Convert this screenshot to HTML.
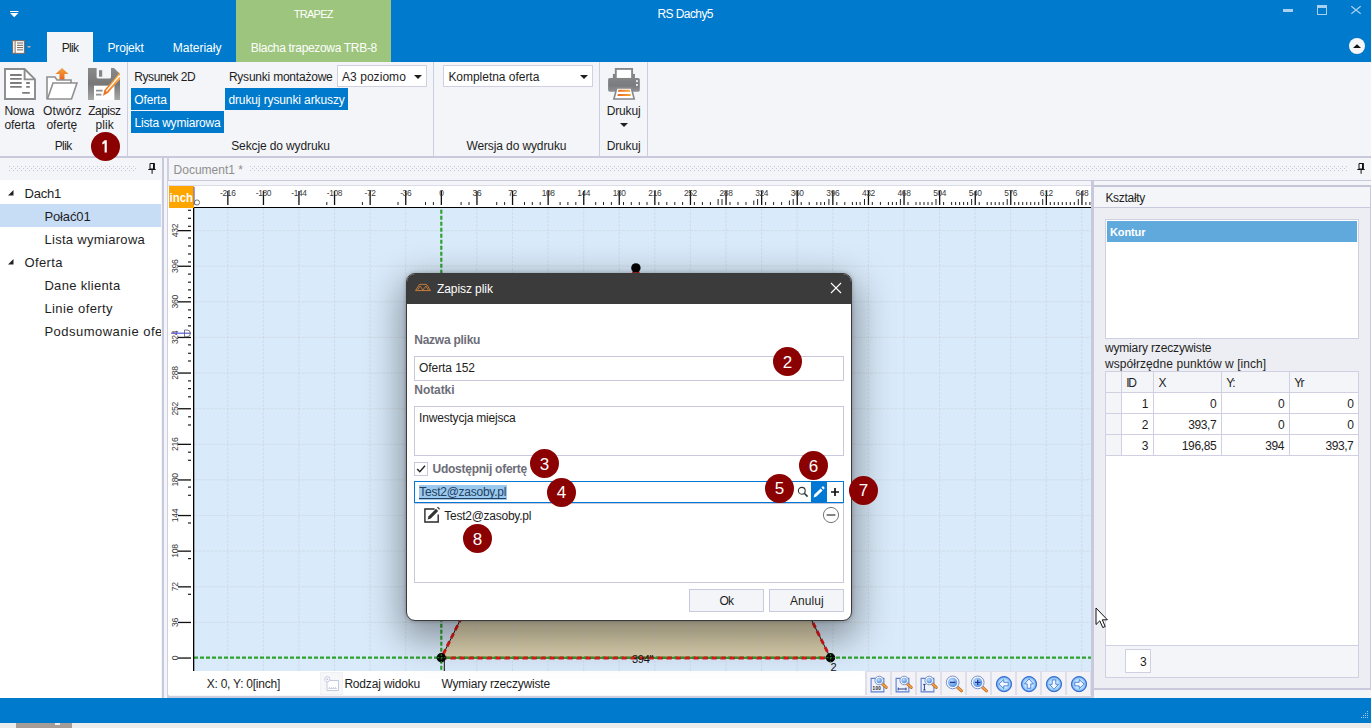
<!DOCTYPE html>
<html>
<head>
<meta charset="utf-8">
<title>RS Dachy5</title>
<style>
*{box-sizing:border-box;margin:0;padding:0}
html,body{width:1371px;height:728px;overflow:hidden}
body{position:relative;background:#f4f5f8;font-family:"Liberation Sans",sans-serif;font-size:12px;color:#1e1e1e}
.a{position:absolute}
.t{position:absolute;white-space:pre;line-height:16px;height:16px}
.combo{position:absolute;background:#fff;border:1px solid #d0d0e2;height:22px}
</style>
</head>
<body>

<div class="a" style="left:0;top:0;width:1371px;height:62px;background:#007acc"></div>
<div class="a" style="left:236px;top:0;width:155px;height:62px;background:#9dc57d"></div>
<div class="a" style="left:47px;top:32px;width:46px;height:31px;background:#f4f5f8"></div>
<svg class="a" style="left:9px;top:9px" width="12" height="10" viewBox="0 0 12 10"><rect x="1" y="2" width="8.4" height="1" fill="#fff"/><path d="M1 4 L9.4 4 L5.2 8.2 Z" fill="#fff"/></svg>
<div class="t" style="left:293.7px;top:6.0px;font-size:11px;color:#fff;letter-spacing:-0.72px;">TRAPEZ</div>
<div class="t" style="left:657.5px;top:6.0px;font-size:12px;color:#fff;letter-spacing:-0.59px;">RS Dachy5</div>
<div class="a" style="left:1283px;top:9px;width:10px;height:3px;background:#a9d0ee"></div>
<div class="a" style="left:1317px;top:5px;width:10px;height:10px;border:1px solid #a9d0ee;border-top:3px solid #a9d0ee"></div>
<svg class="a" style="left:1350px;top:5px" width="12" height="10" viewBox="0 0 12 10"><path d="M1.3 1.2 L10.7 8.8 M10.7 1.2 L1.3 8.8" stroke="#a9d0ee" stroke-width="1.2" fill="none"/></svg>
<svg class="a" style="left:12px;top:40px" width="21" height="14" viewBox="0 0 21 14"><rect x="0.6" y="0.6" width="11.8" height="12.8" fill="#fff" stroke="#7d6c66" stroke-width="1.1"/><rect x="2.6" y="0.6" width="1" height="12.8" fill="#7d6c66"/><path d="M5 3 H11 M5 5.3 H11 M5 7.6 H11 M5 9.9 H11" stroke="#6f605b" stroke-width="1"/><path d="M14.8 6 L19.2 6 L17 8.3 Z" fill="#b5a8a6"/></svg>
<div class="t" style="left:61.8px;top:40.0px;font-size:12px;color:#1e1e1e;letter-spacing:-0.71px;">Plik</div>
<div class="t" style="left:107.5px;top:40.0px;font-size:12px;color:#fff;letter-spacing:-0.18px;">Projekt</div>
<div class="t" style="left:172.7px;top:40.0px;font-size:12px;color:#fff;letter-spacing:0.01px;">Materiały</div>
<div class="t" style="left:250.8px;top:40.0px;font-size:12px;color:#fff;letter-spacing:-0.32px;">Blacha trapezowa TRB-8</div>
<div class="a" style="left:1349px;top:38px;width:16px;height:16px;border-radius:50%;background:#f6f6f8"></div>
<svg class="a" style="left:1349px;top:38px" width="16" height="16" viewBox="0 0 16 16"><path d="M4 9.9 L12 9.9 L8 6.2 Z" fill="#111"/></svg>


<div class="a" style="left:0;top:62px;width:1371px;height:96px;background:#f4f5f8;border-bottom:2px solid #c9c9dd"></div>
<svg class="a" style="left:4px;top:68px" width="32" height="32" viewBox="0 0 32 32"><path d="M1 1 H20.6 L31 11.4 V31 H1 Z" fill="#fff" stroke="#8c8c8c" stroke-width="1.9"/><path d="M20.6 1 V11.4 H31" fill="none" stroke="#8c8c8c" stroke-width="1.9"/><path d="M6.1 7 H17.7 M6.1 10.9 H17.7 M6.1 15 H17.7 M6.1 18.9 H17.7 M22.2 15 H25.8 M22.2 18.9 H25.8 M18.2 24.9 H25.8" stroke="#7c7c7c" stroke-width="1.8"/></svg><svg class="a" style="left:46px;top:68px" width="32" height="32" viewBox="0 0 32 32"><defs><linearGradient id="og" x1="0" y1="0" x2="0" y2="1"><stop offset="0" stop-color="#f6a23c"/><stop offset="1" stop-color="#e8641c"/></linearGradient></defs><path d="M16 0 L22.5 6 H18.5 V12 H13.5 V6 H9.5 Z" fill="url(#og)"/><path d="M1 31 V9 H9 L11 12 H25 V15" fill="#fff" stroke="#8f8f8f" stroke-width="1.6"/><path d="M1.5 31 L7 15 H31 L25.5 31 Z" fill="#fff" stroke="#8f8f8f" stroke-width="1.6"/></svg><svg class="a" style="left:88px;top:68px" width="32" height="32" viewBox="0 0 32 32"><defs><linearGradient id="sg" x1="0" y1="0" x2="0" y2="1"><stop offset="0" stop-color="#8a8a8a"/><stop offset="0.5" stop-color="#777"/><stop offset="1" stop-color="#a8a8a8"/></linearGradient><linearGradient id="pg" x1="0" y1="1" x2="1" y2="0"><stop offset="0" stop-color="#ea6a1c"/><stop offset="1" stop-color="#f9b24a"/></linearGradient></defs><path d="M0 0 H26 L32 6 V32 H0 Z" fill="url(#sg)"/><path d="M8.6 0 H23 V9 Q23 10.5 21.5 10.5 H10.1 Q8.6 10.5 8.6 9 Z" fill="#f4f5f8"/><rect x="11" y="2.2" width="3.2" height="6.5" fill="#858585"/><rect x="6" y="17.7" width="20.4" height="14.3" fill="#fff"/><path d="M8 22.7 H14.6 M8 26.7 H13.4" stroke="#8e8e8e" stroke-width="1.8"/><path d="M32 4.2 V11.2 L20 25 L15 27.8 L16.4 22 Z" fill="url(#pg)"/><path d="M31.6 7.6 L18.2 23.4" stroke="#fff" stroke-width="1.3"/></svg><svg class="a" style="left:607px;top:68px" width="34" height="32" viewBox="0 0 34 32"><defs><linearGradient id="prg" x1="0" y1="0" x2="0" y2="1"><stop offset="0" stop-color="#838588"/><stop offset=".55" stop-color="#797b7e"/><stop offset="1" stop-color="#8f9194"/></linearGradient><linearGradient id="pog" x1="0" y1="0" x2="1" y2="0"><stop offset="0" stop-color="#ea661a"/><stop offset="1" stop-color="#f8aa3e"/></linearGradient></defs><rect x="5.9" y="5.9" width="22" height="5" fill="#808285"/><rect x="8.8" y="0.9" width="16.3" height="10" fill="#fff" stroke="#858789" stroke-width="1.9"/><rect x="1.1" y="10" width="31.7" height="13.7" rx="1.6" fill="url(#prg)"/><rect x="29" y="12.2" width="1.9" height="1.9" fill="#f0f0f2"/><rect x="29" y="16" width="1.9" height="1.9" fill="#f0f0f2"/><path d="M9.8 19.9 H24.3 L27.2 31 H6.9 Z" fill="#fff" stroke="#858789" stroke-width="1.6"/><path d="M11.4 21.8 H23 L23.3 23.7 H11 Z" fill="url(#pog)"/><path d="M10.8 25.9 H23.6 L23.9 27.9 H10.4 Z" fill="url(#pog)"/></svg>
<div class="t" style="left:4.4px;top:103.0px;font-size:12px;color:#1e1e1e;letter-spacing:-0.23px;">Nowa</div><div class="t" style="left:4.4px;top:117.0px;font-size:12px;color:#1e1e1e;letter-spacing:-0.02px;">oferta</div>
<div class="t" style="left:43.1px;top:103.0px;font-size:12px;color:#1e1e1e;letter-spacing:0.06px;">Otwórz</div><div class="t" style="left:46.4px;top:117.0px;font-size:12px;color:#1e1e1e;letter-spacing:0.02px;">ofertę</div>
<div class="t" style="left:88.2px;top:103.0px;font-size:12px;color:#1e1e1e;letter-spacing:-0.51px;">Zapisz</div><div class="t" style="left:95.6px;top:117.0px;font-size:12px;color:#1e1e1e;letter-spacing:0.06px;">plik</div>
<div class="t" style="left:54.7px;top:138.0px;font-size:12px;color:#1e1e1e;letter-spacing:-0.61px;">Plik</div>
<div class="a" style="left:127px;top:62px;width:1px;height:94px;background:#cdcde0"></div><div class="a" style="left:433px;top:62px;width:1px;height:94px;background:#cdcde0"></div><div class="a" style="left:599px;top:62px;width:1px;height:94px;background:#cdcde0"></div><div class="a" style="left:647px;top:62px;width:1px;height:94px;background:#cdcde0"></div>
<div class="t" style="left:134.3px;top:69.0px;font-size:12px;color:#1e1e1e;letter-spacing:-0.44px;">Rysunek 2D</div>
<div class="a" style="left:131px;top:88px;width:39px;height:22px;background:#007acc"></div><div class="t" style="left:134.3px;top:92.0px;font-size:12px;color:#fff;letter-spacing:-0.13px;">Oferta</div>
<div class="a" style="left:131px;top:111px;width:93px;height:22px;background:#007acc"></div><div class="t" style="left:134.6px;top:115.0px;font-size:12px;color:#fff;letter-spacing:-0.19px;">Lista wymiarowa</div>
<div class="t" style="left:228.9px;top:69.0px;font-size:12px;color:#1e1e1e;letter-spacing:-0.22px;">Rysunki montażowe</div>
<div class="combo" style="left:337px;top:65px;width:90px"></div>
<div class="t" style="left:342.0px;top:69.0px;font-size:12px;color:#1e1e1e;letter-spacing:0.05px;">A3 poziomo</div><svg class="a" style="left:414px;top:75.4px" width="8" height="4" viewBox="0 0 8 4"><path d="M0 0 H8 L4.0 4 Z" fill="#1e1e1e"/></svg>
<div class="a" style="left:225px;top:88px;width:123px;height:22px;background:#007acc"></div><div class="t" style="left:228.4px;top:92.0px;font-size:12px;color:#fff;letter-spacing:-0.11px;">drukuj rysunki arkuszy</div>
<div class="t" style="left:231.2px;top:138.0px;font-size:12px;color:#1e1e1e;letter-spacing:-0.12px;">Sekcje do wydruku</div>
<div class="combo" style="left:443px;top:65px;width:150px"></div>
<div class="t" style="left:448.4px;top:69.0px;font-size:12px;color:#1e1e1e;letter-spacing:-0.03px;">Kompletna oferta</div><svg class="a" style="left:580px;top:75.4px" width="8" height="4" viewBox="0 0 8 4"><path d="M0 0 H8 L4.0 4 Z" fill="#1e1e1e"/></svg>
<div class="t" style="left:466.4px;top:138.0px;font-size:12px;color:#1e1e1e;letter-spacing:-0.11px;">Wersja do wydruku</div>
<div class="t" style="left:606.8px;top:103.0px;font-size:12px;color:#1e1e1e;letter-spacing:-0.18px;">Drukuj</div><svg class="a" style="left:620px;top:123px" width="8" height="4" viewBox="0 0 8 4"><path d="M0 0 H8 L4.0 4 Z" fill="#1e1e1e"/></svg>
<div class="t" style="left:606.8px;top:138.0px;font-size:12px;color:#1e1e1e;letter-spacing:-0.18px;">Drukuj</div>


<!-- left panel -->
<div class="a" style="left:0;top:180px;width:161px;height:518px;background:#fff"></div>
<svg class="a" style="left:9px;top:166px" width="128" height="5"><defs><pattern id="gp9" width="4" height="4" patternUnits="userSpaceOnUse"><rect x="0" y="0" width="1" height="1" fill="#c4c4d4"/><rect x="2" y="2" width="1" height="1" fill="#c4c4d4"/></pattern></defs><rect width="128" height="5" fill="url(#gp9)"/></svg><svg class="a" style="left:147.5px;top:163px" width="8" height="11" viewBox="0 0 8 11"><path d="M2 0.5 H6.2 V6 H2 Z" fill="none" stroke="#111" stroke-width="1"/><rect x="5" y="0" width="1.7" height="6" fill="#111"/><rect x="0.3" y="6" width="7.4" height="1" fill="#111"/><rect x="3.6" y="7" width="1" height="3.8" fill="#111"/></svg>
<div class="a" style="left:162px;top:158px;width:1.5px;height:540px;background:#c9c9dd"></div>
<div class="a" style="left:167px;top:158px;width:2px;height:540px;background:#cfcfe0"></div>
<div class="a" style="left:0;top:204px;width:161px;height:23px;background:#c7dcf5"></div>
<div class="a" style="left:0;top:180px;width:161px;height:518px;overflow:hidden"><div class="a" style="left:0;top:-180px;width:400px;height:728px">
<svg class="a" style="left:7.5px;top:189.5px" width="6" height="6" viewBox="0 0 6 6"><path d="M5.5 0 V5.5 H0 Z" fill="#222"/></svg><div class="t" style="left:24.5px;top:186.0px;font-size:13px;color:#1e1e1e;letter-spacing:-0.22px;">Dach1</div>
<div class="t" style="left:44.4px;top:209.0px;font-size:13px;color:#1e1e1e;letter-spacing:-0.11px;">Połać01</div>
<div class="t" style="left:44.4px;top:232.0px;font-size:13px;color:#1e1e1e;letter-spacing:0.31px;">Lista wymiarowa</div>
<svg class="a" style="left:7.5px;top:258.5px" width="6" height="6" viewBox="0 0 6 6"><path d="M5.5 0 V5.5 H0 Z" fill="#222"/></svg><div class="t" style="left:24.5px;top:255.0px;font-size:13px;color:#1e1e1e;letter-spacing:0.35px;">Oferta</div>
<div class="t" style="left:44.4px;top:278.0px;font-size:13px;color:#1e1e1e;letter-spacing:0.33px;">Dane klienta</div>
<div class="t" style="left:44.4px;top:301.0px;font-size:13px;color:#1e1e1e;letter-spacing:0.42px;">Linie oferty</div>
<div class="t" style="left:44.4px;top:324.0px;font-size:13px;color:#1e1e1e;letter-spacing:0.49px;">Podsumowanie oferty</div>
</div></div>
<!-- doc header -->
<div class="t" style="left:173.6px;top:162.0px;font-size:12px;color:#8e8e8e;">Document1 *</div>
<svg class="a" style="left:250px;top:166px" width="1097" height="5"><defs><pattern id="gp250" width="4" height="4" patternUnits="userSpaceOnUse"><rect x="0" y="0" width="1" height="1" fill="#c4c4d4"/><rect x="2" y="2" width="1" height="1" fill="#c4c4d4"/></pattern></defs><rect width="1097" height="5" fill="url(#gp250)"/></svg><svg class="a" style="left:1357px;top:163px" width="8" height="11" viewBox="0 0 8 11"><path d="M2 0.5 H6.2 V6 H2 Z" fill="none" stroke="#111" stroke-width="1"/><rect x="5" y="0" width="1.7" height="6" fill="#111"/><rect x="0.3" y="6" width="7.4" height="1" fill="#111"/><rect x="3.6" y="7" width="1" height="3.8" fill="#111"/></svg>
<div class="a" style="left:168px;top:180px;width:1203px;height:1px;background:#c9c9dd"></div>

<svg class="a" style="left:0;top:0" width="1371" height="728" viewBox="0 0 1371 728"><rect x="168" y="181" width="923" height="5" fill="#f4f5f8"/><rect x="168" y="185" width="923" height="1" fill="#dcdce8"/><rect x="168" y="186" width="923" height="22" fill="#fff"/><rect x="168" y="208" width="26" height="463" fill="#fff"/><rect x="194" y="208" width="897" height="463" fill="#d9eafa"/><defs><linearGradient id="tg" x1="0" y1="0" x2="0" y2="1"><stop offset="0" stop-color="#efe6cc"/><stop offset="1" stop-color="#dbd0ad"/></linearGradient></defs><path d="M441.3 658.0 L830.5 658.0 L635.9 268.2 Z" fill="url(#tg)"/><path d="M227.8 208 V671 M263.4 208 V671 M298.9 208 V671 M334.5 208 V671 M370.1 208 V671 M405.7 208 V671 M441.3 208 V671 M476.9 208 V671 M512.5 208 V671 M548.1 208 V671 M583.7 208 V671 M619.2 208 V671 M654.8 208 V671 M690.4 208 V671 M726.0 208 V671 M761.6 208 V671 M797.2 208 V671 M832.8 208 V671 M868.4 208 V671 M904.0 208 V671 M939.6 208 V671 M975.2 208 V671 M1010.7 208 V671 M1046.3 208 V671 M1081.9 208 V671 M194 658.0 H1091 M194 622.4 H1091 M194 586.8 H1091 M194 551.1 H1091 M194 515.5 H1091 M194 479.9 H1091 M194 444.3 H1091 M194 408.7 H1091 M194 373.0 H1091 M194 337.4 H1091 M194 301.8 H1091 M194 266.2 H1091 M194 230.6 H1091" stroke="#c9d1da" stroke-width="1" stroke-dasharray="3 1" fill="none" opacity=".5"/><path d="M441.3 209.8 V671" stroke="#2ea32e" stroke-width="2.2" stroke-dasharray="4 2" fill="none"/><path d="M194 657.7 H1091" stroke="#2ea32e" stroke-width="2.2" stroke-dasharray="4 2" fill="none"/><path d="M441.3 658.0 L830.5 658.0 L635.9 268.2 Z" stroke="#111" stroke-width="1" fill="none"/><path d="M441.3 658.0 L830.5 658.0 L635.9 268.2 Z" stroke="#e01818" stroke-width="2.9" stroke-dasharray="5.4 3.6" fill="none"/><path d="M441.3 657.7 H830.5" stroke="#2ea32e" stroke-width="2" stroke-dasharray="4 5" stroke-dashoffset="-5.5" fill="none"/><circle cx="441.3" cy="657.7" r="4.7" fill="#050505"/><path d="M437.3 657.7 H445.3 M441.3 654.0 V662.0" stroke="#1f7a1f" stroke-width="1.2" stroke-dasharray="2 1.5"/><circle cx="830.5" cy="657.7" r="4.7" fill="#050505"/><path d="M826.5 657.7 H834.5 M830.5 654.0 V662.0" stroke="#1f7a1f" stroke-width="1.2" stroke-dasharray="2 1.5"/><circle cx="635.9" cy="267.9" r="4.7" fill="#050505"/><clipPath id="cc"><rect x="194" y="208" width="897" height="463"/></clipPath><g clip-path="url(#cc)" font-family="Liberation Sans" font-size="11" fill="#111"><rect x="443.8" y="660" width="1" height="11" fill="#111"/><text x="830.5" y="670.8">2</text><text x="632" y="662.5" letter-spacing="-0.3">394"</text></g><rect x="194" y="207" width="897" height="1" fill="#000"/><rect x="193" y="207" width="1.3" height="464" fill="#000"/><rect x="227.2" y="191" width="1.3" height="14" fill="#111"/><rect x="262.8" y="191" width="1.3" height="14" fill="#111"/><rect x="298.3" y="191" width="1.3" height="14" fill="#111"/><rect x="326.3" y="202" width="1" height="3" fill="#222"/><rect x="333.9" y="191" width="1.3" height="14" fill="#111"/><rect x="361.9" y="202" width="1" height="3" fill="#222"/><rect x="369.5" y="191" width="1.3" height="14" fill="#111"/><rect x="397.5" y="202" width="1" height="3" fill="#222"/><rect x="405.1" y="191" width="1.3" height="14" fill="#111"/><rect x="425.0" y="202" width="1" height="3" fill="#222"/><rect x="432.9" y="202" width="1" height="3" fill="#222"/><rect x="440.7" y="191" width="1.3" height="14" fill="#111"/><rect x="460.6" y="202" width="1" height="3" fill="#222"/><rect x="468.5" y="202" width="1" height="3" fill="#222"/><rect x="476.3" y="191" width="1.3" height="14" fill="#111"/><rect x="496.2" y="202" width="1" height="3" fill="#222"/><rect x="504.1" y="202" width="1" height="3" fill="#222"/><rect x="511.9" y="191" width="1.3" height="14" fill="#111"/><rect x="524.0" y="202" width="1" height="3" fill="#222"/><rect x="531.8" y="202" width="1" height="3" fill="#222"/><rect x="539.7" y="202" width="1" height="3" fill="#222"/><rect x="547.5" y="191" width="1.3" height="14" fill="#111"/><rect x="559.6" y="202" width="1" height="3" fill="#222"/><rect x="567.4" y="202" width="1" height="3" fill="#222"/><rect x="575.3" y="202" width="1" height="3" fill="#222"/><rect x="583.1" y="191" width="1.3" height="14" fill="#111"/><rect x="595.2" y="202" width="1" height="3" fill="#222"/><rect x="603.0" y="202" width="1" height="3" fill="#222"/><rect x="610.9" y="202" width="1" height="3" fill="#222"/><rect x="618.6" y="191" width="1.3" height="14" fill="#111"/><rect x="623.0" y="202" width="1" height="3" fill="#222"/><rect x="630.8" y="202" width="1" height="3" fill="#222"/><rect x="638.8" y="202" width="1" height="3" fill="#222"/><rect x="646.5" y="202" width="1" height="3" fill="#222"/><rect x="654.2" y="191" width="1.3" height="14" fill="#111"/><rect x="658.3" y="202" width="1" height="3" fill="#222"/><rect x="666.3" y="202" width="1" height="3" fill="#222"/><rect x="674.3" y="202" width="1" height="3" fill="#222"/><rect x="682.1" y="202" width="1" height="3" fill="#222"/><rect x="689.8" y="191" width="1.3" height="14" fill="#111"/><rect x="693.9" y="202" width="1" height="3" fill="#222"/><rect x="701.9" y="202" width="1" height="3" fill="#222"/><rect x="709.9" y="202" width="1" height="3" fill="#222"/><rect x="717.6" y="199" width="1" height="6" fill="#222"/><rect x="721.5" y="199" width="1" height="6" fill="#222"/><rect x="725.4" y="191" width="1.3" height="14" fill="#111"/><rect x="729.5" y="202" width="1" height="3" fill="#222"/><rect x="737.5" y="202" width="1" height="3" fill="#222"/><rect x="745.5" y="202" width="1" height="3" fill="#222"/><rect x="753.3" y="200.5" width="1" height="4.5" fill="#222"/><rect x="757.1" y="199" width="1" height="6" fill="#222"/><rect x="761.0" y="191" width="1.3" height="14" fill="#111"/><rect x="765.1" y="202" width="1" height="3" fill="#222"/><rect x="773.1" y="202" width="1" height="3" fill="#222"/><rect x="781.1" y="202" width="1" height="3" fill="#222"/><rect x="788.9" y="200.5" width="1" height="4.5" fill="#222"/><rect x="792.7" y="199" width="1" height="6" fill="#222"/><rect x="796.6" y="191" width="1.3" height="14" fill="#111"/><rect x="800.7" y="202" width="1" height="3" fill="#222"/><rect x="808.7" y="202" width="1" height="3" fill="#222"/><rect x="816.3" y="202" width="1" height="3" fill="#222"/><rect x="820.3" y="202" width="1" height="3" fill="#222"/><rect x="824.0" y="202" width="1" height="3" fill="#222"/><rect x="828.4" y="199" width="1" height="6" fill="#222"/><rect x="832.2" y="191" width="1.3" height="14" fill="#111"/><rect x="836.3" y="202" width="1" height="3" fill="#222"/><rect x="844.3" y="202" width="1" height="3" fill="#222"/><rect x="851.9" y="202" width="1" height="3" fill="#222"/><rect x="855.9" y="202" width="1" height="3" fill="#222"/><rect x="859.6" y="202" width="1" height="3" fill="#222"/><rect x="864.0" y="199" width="1" height="6" fill="#222"/><rect x="867.8" y="191" width="1.3" height="14" fill="#111"/><rect x="871.8" y="202" width="1" height="3" fill="#222"/><rect x="879.9" y="202" width="1" height="3" fill="#222"/><rect x="887.9" y="202" width="1" height="3" fill="#222"/><rect x="891.9" y="202" width="1" height="3" fill="#222"/><rect x="895.9" y="202" width="1" height="3" fill="#222"/><rect x="899.9" y="199" width="1" height="6" fill="#222"/><rect x="903.4" y="191" width="1.3" height="14" fill="#111"/><rect x="907.5" y="202" width="1" height="3" fill="#222"/><rect x="915.5" y="202" width="1" height="3" fill="#222"/><rect x="919.5" y="202" width="1" height="3" fill="#222"/><rect x="923.5" y="202" width="1" height="3" fill="#222"/><rect x="927.5" y="202" width="1" height="3" fill="#222"/><rect x="931.5" y="202" width="1" height="3" fill="#222"/><rect x="935.5" y="199" width="1" height="6" fill="#222"/><rect x="939.0" y="191" width="1.3" height="14" fill="#111"/><rect x="943.1" y="202" width="1" height="3" fill="#222"/><rect x="951.1" y="202" width="1" height="3" fill="#222"/><rect x="955.1" y="202" width="1" height="3" fill="#222"/><rect x="959.1" y="202" width="1" height="3" fill="#222"/><rect x="963.1" y="202" width="1" height="3" fill="#222"/><rect x="967.1" y="202" width="1" height="3" fill="#222"/><rect x="971.1" y="199" width="1" height="6" fill="#222"/><rect x="974.6" y="191" width="1.3" height="14" fill="#111"/><rect x="978.7" y="202" width="1" height="3" fill="#222"/><rect x="986.7" y="202" width="1" height="3" fill="#222"/><rect x="990.7" y="202" width="1" height="3" fill="#222"/><rect x="994.7" y="202" width="1" height="3" fill="#222"/><rect x="998.7" y="202" width="1" height="3" fill="#222"/><rect x="1002.7" y="202" width="1" height="3" fill="#222"/><rect x="1006.7" y="199" width="1" height="6" fill="#222"/><rect x="1010.1" y="191" width="1.3" height="14" fill="#111"/><rect x="1014.2" y="202" width="1" height="3" fill="#222"/><rect x="1018.2" y="202" width="1" height="3" fill="#222"/><rect x="1022.2" y="202" width="1" height="3" fill="#222"/><rect x="1026.2" y="202" width="1" height="3" fill="#222"/><rect x="1030.2" y="202" width="1" height="3" fill="#222"/><rect x="1034.2" y="202" width="1" height="3" fill="#222"/><rect x="1038.2" y="202" width="1" height="3" fill="#222"/><rect x="1042.2" y="199" width="1" height="6" fill="#222"/><rect x="1045.7" y="191" width="1.3" height="14" fill="#111"/><rect x="1049.8" y="202" width="1" height="3" fill="#222"/><rect x="1053.8" y="202" width="1" height="3" fill="#222"/><rect x="1057.8" y="202" width="1" height="3" fill="#222"/><rect x="1061.8" y="202" width="1" height="3" fill="#222"/><rect x="1065.8" y="202" width="1" height="3" fill="#222"/><rect x="1069.8" y="202" width="1" height="3" fill="#222"/><rect x="1073.8" y="202" width="1" height="3" fill="#222"/><rect x="1077.8" y="199" width="1" height="6" fill="#222"/><rect x="1081.3" y="191" width="1.3" height="14" fill="#111"/><rect x="1085.4" y="202" width="1" height="3" fill="#222"/><rect x="1089.4" y="202" width="1" height="3" fill="#222"/><clipPath id="rc"><rect x="194" y="186" width="897" height="22"/></clipPath><g clip-path="url(#rc)" font-family="Liberation Sans" font-size="8.4" fill="#3a3a3a" letter-spacing="-0.35"><text x="227.8" y="196" text-anchor="middle">-216</text><text x="263.4" y="196" text-anchor="middle">-180</text><text x="298.9" y="196" text-anchor="middle">-144</text><text x="334.5" y="196" text-anchor="middle">-108</text><text x="370.1" y="196" text-anchor="middle">-72</text><text x="405.7" y="196" text-anchor="middle">-36</text><text x="441.3" y="196" text-anchor="middle">0</text><text x="476.9" y="196" text-anchor="middle">36</text><text x="512.5" y="196" text-anchor="middle">72</text><text x="548.1" y="196" text-anchor="middle">108</text><text x="583.7" y="196" text-anchor="middle">144</text><text x="619.2" y="196" text-anchor="middle">180</text><text x="654.8" y="196" text-anchor="middle">216</text><text x="690.4" y="196" text-anchor="middle">252</text><text x="726.0" y="196" text-anchor="middle">288</text><text x="761.6" y="196" text-anchor="middle">324</text><text x="797.2" y="196" text-anchor="middle">360</text><text x="832.8" y="196" text-anchor="middle">396</text><text x="868.4" y="196" text-anchor="middle">432</text><text x="904.0" y="196" text-anchor="middle">468</text><text x="939.6" y="196" text-anchor="middle">504</text><text x="975.2" y="196" text-anchor="middle">540</text><text x="1010.7" y="196" text-anchor="middle">576</text><text x="1046.3" y="196" text-anchor="middle">612</text><text x="1081.9" y="196" text-anchor="middle">648</text></g><rect x="178" y="657.4" width="13" height="1.3" fill="#111"/><rect x="178" y="621.8" width="13" height="1.3" fill="#111"/><rect x="178" y="586.2" width="13" height="1.3" fill="#111"/><rect x="188" y="593.7" width="3" height="1.2" fill="#222"/><rect x="178" y="550.5" width="13" height="1.3" fill="#111"/><rect x="188" y="558.0" width="3" height="1.2" fill="#222"/><rect x="178" y="514.9" width="13" height="1.3" fill="#111"/><rect x="188" y="522.4" width="3" height="1.2" fill="#222"/><rect x="178" y="479.3" width="13" height="1.3" fill="#111"/><rect x="188" y="486.5" width="3" height="1.2" fill="#222"/><rect x="188" y="494.7" width="3" height="1.2" fill="#222"/><rect x="178" y="443.7" width="13" height="1.3" fill="#111"/><rect x="188" y="451.6" width="3" height="1.2" fill="#222"/><rect x="188" y="459.7" width="3" height="1.2" fill="#222"/><rect x="178" y="408.1" width="13" height="1.3" fill="#111"/><rect x="188" y="416.2" width="3" height="1.2" fill="#222"/><rect x="188" y="424.4" width="3" height="1.2" fill="#222"/><rect x="178" y="372.4" width="13" height="1.3" fill="#111"/><rect x="188" y="380.3" width="3" height="1.2" fill="#222"/><rect x="188" y="388.0" width="3" height="1.2" fill="#222"/><rect x="188" y="396.2" width="3" height="1.2" fill="#222"/><rect x="178" y="336.8" width="13" height="1.3" fill="#111"/><rect x="188" y="344.3" width="3" height="1.2" fill="#222"/><rect x="188" y="352.7" width="3" height="1.2" fill="#222"/><rect x="188" y="360.4" width="3" height="1.2" fill="#222"/><rect x="178" y="301.2" width="13" height="1.3" fill="#111"/><rect x="188" y="309.3" width="3" height="1.2" fill="#222"/><rect x="188" y="317.0" width="3" height="1.2" fill="#222"/><rect x="188" y="325.3" width="3" height="1.2" fill="#222"/><rect x="178" y="265.6" width="13" height="1.3" fill="#111"/><rect x="188" y="273.5" width="3" height="1.2" fill="#222"/><rect x="188" y="281.6" width="3" height="1.2" fill="#222"/><rect x="188" y="289.3" width="3" height="1.2" fill="#222"/><rect x="188" y="297.0" width="3" height="1.2" fill="#222"/><rect x="178" y="230.0" width="13" height="1.3" fill="#111"/><rect x="188" y="237.4" width="3" height="1.2" fill="#222"/><rect x="188" y="245.4" width="3" height="1.2" fill="#222"/><rect x="188" y="253.4" width="3" height="1.2" fill="#222"/><rect x="188" y="261.4" width="3" height="1.2" fill="#222"/><rect x="188" y="209.7" width="3" height="1.2" fill="#222"/><rect x="188" y="217.7" width="3" height="1.2" fill="#222"/><rect x="188" y="225.7" width="3" height="1.2" fill="#222"/><g font-family="Liberation Sans" font-size="8.6" fill="#3a3a3a" letter-spacing="-0.3"><text transform="translate(177.6 658.0) rotate(-90)" text-anchor="middle">0</text><text transform="translate(177.6 622.4) rotate(-90)" text-anchor="middle">36</text><text transform="translate(177.6 586.8) rotate(-90)" text-anchor="middle">72</text><text transform="translate(177.6 551.1) rotate(-90)" text-anchor="middle">108</text><text transform="translate(177.6 515.5) rotate(-90)" text-anchor="middle">144</text><text transform="translate(177.6 479.9) rotate(-90)" text-anchor="middle">180</text><text transform="translate(177.6 444.3) rotate(-90)" text-anchor="middle">216</text><text transform="translate(177.6 408.7) rotate(-90)" text-anchor="middle">252</text><text transform="translate(177.6 373.0) rotate(-90)" text-anchor="middle">288</text><text transform="translate(177.6 337.4) rotate(-90)" text-anchor="middle">324</text><text transform="translate(177.6 301.8) rotate(-90)" text-anchor="middle">360</text><text transform="translate(177.6 266.2) rotate(-90)" text-anchor="middle">396</text><text transform="translate(177.6 230.6) rotate(-90)" text-anchor="middle">432</text></g><rect x="169" y="186" width="25" height="22" fill="#fea500"/><text x="169.6" y="201.9" font-family="Liberation Sans" font-size="13" font-weight="bold" fill="#fff" textLength="23.4" lengthAdjust="spacingAndGlyphs">inch</text><rect x="193.6" y="187" width="1" height="18" fill="#5a5ae0"/><circle cx="197" cy="202.5" r="2.6" fill="none" stroke="#555" stroke-width=".8"/><rect x="171" y="332.6" width="20" height="1.2" fill="#5a5ae0"/><path d="M184.5 330 h2.5 a3.4 3.4 0 0 1 0 6.8 h-2.5 z" fill="none" stroke="#555" stroke-width=".8"/></svg>

<div class="a" style="left:1091px;top:181px;width:3px;height:517px;background:#c9c9dd"></div>
<div class="a" style="left:1094px;top:185px;width:277px;height:2px;background:#c5c5d8"></div>
<div class="a" style="left:1094px;top:187px;width:277px;height:20px;background:#f4f5f8"></div>
<div class="a" style="left:1094px;top:207px;width:277px;height:1px;background:#c9c9dd"></div>
<div class="a" style="left:1094px;top:208px;width:276px;height:480px;background:#edeef3"></div>
<div class="a" style="left:1370px;top:187px;width:1px;height:503px;background:#c9c9dd"></div>
<div class="a" style="left:1094px;top:688px;width:277px;height:2px;background:#c9c9dd"></div>
<div class="t" style="left:1105.4px;top:190.0px;font-size:12px;color:#1e1e1e;letter-spacing:-0.29px;">Kształty</div>
<div class="a" style="left:1105px;top:219px;width:254px;height:120px;background:#fff;border:1px solid #cfcfe0"></div>
<div class="a" style="left:1107px;top:221px;width:250px;height:21px;background:#5fa9dd"></div>
<div class="t" style="left:1110.0px;top:224.0px;font-size:11px;color:#fff;font-weight:bold;letter-spacing:-0.11px;">Kontur</div>
<div class="t" style="left:1104.9px;top:340.0px;font-size:12px;color:#1e1e1e;letter-spacing:-0.15px;">wymiary rzeczywiste</div>
<div class="t" style="left:1104.9px;top:356.0px;font-size:12px;color:#1e1e1e;letter-spacing:0.07px;">współrzędne punktów w [inch]</div>
<div class="a" style="left:1105px;top:371px;width:254px;height:307px;background:#fff;border:1px solid #d0d0e2"></div>
<div class="a" style="left:1106px;top:372px;width:16px;height:21px;background:#f4f5f8;border-right:1px solid #d0d0e2;border-bottom:1px solid #d0d0e2"></div><div class="a" style="left:1122px;top:372px;width:32px;height:21px;background:#f4f5f8;border-right:1px solid #d0d0e2;border-bottom:1px solid #d0d0e2"></div><div class="a" style="left:1154px;top:372px;width:68px;height:21px;background:#f4f5f8;border-right:1px solid #d0d0e2;border-bottom:1px solid #d0d0e2"></div><div class="a" style="left:1222px;top:372px;width:68px;height:21px;background:#f4f5f8;border-right:1px solid #d0d0e2;border-bottom:1px solid #d0d0e2"></div><div class="a" style="left:1290px;top:372px;width:69px;height:21px;background:#f4f5f8;border-right:1px solid #d0d0e2;border-bottom:1px solid #d0d0e2"></div><div class="a" style="left:1106px;top:393px;width:16px;height:21px;background:#f4f5f8;border-right:1px solid #d0d0e2;border-bottom:1px solid #d0d0e2"></div><div class="a" style="left:1122px;top:393px;width:32px;height:21px;background:#fff;border-right:1px solid #d0d0e2;border-bottom:1px solid #d0d0e2"></div><div class="a" style="left:1154px;top:393px;width:68px;height:21px;background:#fff;border-right:1px solid #d0d0e2;border-bottom:1px solid #d0d0e2"></div><div class="a" style="left:1222px;top:393px;width:68px;height:21px;background:#fff;border-right:1px solid #d0d0e2;border-bottom:1px solid #d0d0e2"></div><div class="a" style="left:1290px;top:393px;width:69px;height:21px;background:#fff;border-right:1px solid #d0d0e2;border-bottom:1px solid #d0d0e2"></div><div class="a" style="left:1106px;top:414px;width:16px;height:21px;background:#f4f5f8;border-right:1px solid #d0d0e2;border-bottom:1px solid #d0d0e2"></div><div class="a" style="left:1122px;top:414px;width:32px;height:21px;background:#fff;border-right:1px solid #d0d0e2;border-bottom:1px solid #d0d0e2"></div><div class="a" style="left:1154px;top:414px;width:68px;height:21px;background:#fff;border-right:1px solid #d0d0e2;border-bottom:1px solid #d0d0e2"></div><div class="a" style="left:1222px;top:414px;width:68px;height:21px;background:#fff;border-right:1px solid #d0d0e2;border-bottom:1px solid #d0d0e2"></div><div class="a" style="left:1290px;top:414px;width:69px;height:21px;background:#fff;border-right:1px solid #d0d0e2;border-bottom:1px solid #d0d0e2"></div><div class="a" style="left:1106px;top:435px;width:16px;height:21px;background:#f4f5f8;border-right:1px solid #d0d0e2;border-bottom:1px solid #d0d0e2"></div><div class="a" style="left:1122px;top:435px;width:32px;height:21px;background:#fff;border-right:1px solid #d0d0e2;border-bottom:1px solid #d0d0e2"></div><div class="a" style="left:1154px;top:435px;width:68px;height:21px;background:#fff;border-right:1px solid #d0d0e2;border-bottom:1px solid #d0d0e2"></div><div class="a" style="left:1222px;top:435px;width:68px;height:21px;background:#fff;border-right:1px solid #d0d0e2;border-bottom:1px solid #d0d0e2"></div><div class="a" style="left:1290px;top:435px;width:69px;height:21px;background:#fff;border-right:1px solid #d0d0e2;border-bottom:1px solid #d0d0e2"></div>
<div class="t" style="left:1126.3px;top:375.0px;font-size:12px;color:#1e1e1e;letter-spacing:-1.30px;">ID</div><div class="t" style="left:1158.4px;top:375.0px;font-size:12px;color:#1e1e1e;letter-spacing:-1.42px;">X</div><div class="t" style="left:1226.2px;top:375.0px;font-size:12px;color:#1e1e1e;letter-spacing:-1.29px;">Y:</div><div class="t" style="left:1294.2px;top:375.0px;font-size:12px;color:#1e1e1e;letter-spacing:-1.80px;">Yr</div>
<div class="t" style="left:1141.8px;top:396.0px;font-size:12px;color:#1e1e1e;letter-spacing:-0.24px;">1</div><div class="t" style="left:1210.1px;top:396.0px;font-size:12px;color:#1e1e1e;letter-spacing:-0.24px;">0</div><div class="t" style="left:1278.1px;top:396.0px;font-size:12px;color:#1e1e1e;letter-spacing:-0.24px;">0</div><div class="t" style="left:1347.3px;top:396.0px;font-size:12px;color:#1e1e1e;letter-spacing:-0.24px;">0</div>
<div class="t" style="left:1141.8px;top:417.0px;font-size:12px;color:#1e1e1e;letter-spacing:-0.24px;">2</div><div class="t" style="left:1188.2px;top:417.0px;font-size:12px;color:#1e1e1e;letter-spacing:-0.41px;">393,7</div><div class="t" style="left:1278.1px;top:417.0px;font-size:12px;color:#1e1e1e;letter-spacing:-0.24px;">0</div><div class="t" style="left:1347.3px;top:417.0px;font-size:12px;color:#1e1e1e;letter-spacing:-0.24px;">0</div>
<div class="t" style="left:1141.8px;top:438.0px;font-size:12px;color:#1e1e1e;letter-spacing:-0.24px;">3</div><div class="t" style="left:1181.8px;top:438.0px;font-size:12px;color:#1e1e1e;letter-spacing:-0.37px;">196,85</div><div class="t" style="left:1265.2px;top:438.0px;font-size:12px;color:#1e1e1e;letter-spacing:-0.34px;">394</div><div class="t" style="left:1325.4px;top:438.0px;font-size:12px;color:#1e1e1e;letter-spacing:-0.41px;">393,7</div>
<div class="a" style="left:1106px;top:645px;width:252px;height:32px;background:#f4f5f8;border-top:1px solid #d0d0e2"></div>
<div class="a" style="left:1125px;top:649px;width:26px;height:24px;background:#fff;border:1px solid #d0d0e2"></div>
<div class="t" style="left:1140.0px;top:654.0px;font-size:12px;color:#1e1e1e;letter-spacing:-0.24px;">3</div>


<div class="a" style="left:168px;top:671px;width:923px;height:24px;background:#fff"></div>
<div class="a" style="left:865px;top:671px;width:226px;height:24px;background:#dfdfea"></div>
<div class="a" style="left:168px;top:696px;width:926px;height:2px;background:#cdcde0"></div>
<div class="t" style="left:206.7px;top:676.0px;font-size:12px;color:#1e1e1e;letter-spacing:-0.24px;">X: 0, Y: 0[inch]</div>
<div class="a" style="left:319.5px;top:671.5px;width:23.6px;height:23.6px;background:#f7f7fa;border:1px solid #f0f0f5"></div>
<svg class="a" style="left:322px;top:674px" width="19" height="19" viewBox="0 0 19 19"><path d="M5 6.5 H16.5 V16.5 H5 Z" fill="#fff" stroke="#c3c8dc" stroke-width="1"/><path d="M6.5 14.5 H15 M7.5 14.5 v-1.5 M9.5 14.5 v-1.5 M11.5 14.5 v-1.5 M13.5 14.5 v-1.5" stroke="#c3c8dc" stroke-width=".8" fill="none"/><circle cx="5.2" cy="5.2" r="2.6" fill="#f7f7fa" stroke="#c3c8dc" stroke-width="1.2" stroke-dasharray="1.4 .8"/><circle cx="5.2" cy="5.2" r=".9" fill="#c3c8dc"/></svg>
<div class="t" style="left:344.4px;top:676.0px;font-size:12px;color:#1e1e1e;letter-spacing:-0.19px;">Rodzaj widoku</div>
<div class="t" style="left:441.5px;top:676.0px;font-size:12px;color:#1e1e1e;letter-spacing:-0.18px;">Wymiary rzeczywiste</div>
<svg class="a" style="left:867px;top:671.6px" width="23.2" height="23.6" viewBox="0 0 23.2 23.6"><rect width="23.2" height="23.6" fill="#f3f3f7"/><defs><radialGradient id="lg" cx=".4" cy=".35" r=".7"><stop offset="0" stop-color="#bfe0ff"/><stop offset="1" stop-color="#4a8ae0"/></radialGradient><radialGradient id="bg2" cx=".5" cy=".5" r=".5"><stop offset="0" stop-color="#eaf7ff"/><stop offset=".55" stop-color="#c8e9ff"/><stop offset=".82" stop-color="#86bff6"/><stop offset="1" stop-color="#2f6ad6"/></radialGradient></defs><path d="M4.1 6.4 H16.9 V19.9 H4.1 Z" fill="#eef2fa" stroke="#5f7fd0" stroke-width="1.1"/><path d="M15.6 12.2 L19.2 15.4" stroke="#b8641c" stroke-width="3" stroke-linecap="round"/><path d="M15.6 12.2 L19.2 15.4" stroke="#f0a048" stroke-width="1.8" stroke-linecap="round"/><circle cx="12.2" cy="8.5" r="4.3" fill="#f4f7fd" stroke="#7f8fc0" stroke-width="1"/><circle cx="12.2" cy="8.5" r="2.67" fill="url(#lg)"/><text x="5.6" y="18" font-family="Liberation Sans" font-size="4.6" font-weight="bold" fill="#222" letter-spacing=".3">100</text></svg><svg class="a" style="left:892px;top:671.6px" width="23.2" height="23.6" viewBox="0 0 23.2 23.6"><rect width="23.2" height="23.6" fill="#f3f3f7"/><path d="M4.1 6.4 H16.9 V19.9 H4.1 Z" fill="#eef2fa" stroke="#5f7fd0" stroke-width="1.1"/><path d="M15.6 12.2 L19.2 15.4" stroke="#b8641c" stroke-width="3" stroke-linecap="round"/><path d="M15.6 12.2 L19.2 15.4" stroke="#f0a048" stroke-width="1.8" stroke-linecap="round"/><circle cx="12.2" cy="8.5" r="4.3" fill="#f4f7fd" stroke="#7f8fc0" stroke-width="1"/><circle cx="12.2" cy="8.5" r="2.67" fill="url(#lg)"/><path d="M6.2 17 H14 M6.2 15.6 V18.4 M14 15.6 V18.4" stroke="#2a3f8a" stroke-width="1" fill="none"/></svg><svg class="a" style="left:917px;top:671.6px" width="23.2" height="23.6" viewBox="0 0 23.2 23.6"><rect width="23.2" height="23.6" fill="#f3f3f7"/><path d="M4.1 6.4 H16.9 V19.9 H4.1 Z" fill="#eef2fa" stroke="#5f7fd0" stroke-width="1.1"/><path d="M15.6 12.2 L19.2 15.4" stroke="#b8641c" stroke-width="3" stroke-linecap="round"/><path d="M15.6 12.2 L19.2 15.4" stroke="#f0a048" stroke-width="1.8" stroke-linecap="round"/><circle cx="12.2" cy="8.5" r="4.3" fill="#f4f7fd" stroke="#7f8fc0" stroke-width="1"/><circle cx="12.2" cy="8.5" r="2.67" fill="url(#lg)"/><path d="M7.4 12.4 V18 M6.2 12.4 H8.6 M6.2 18 H8.6" stroke="#2a3f8a" stroke-width="1" fill="none"/></svg><svg class="a" style="left:942px;top:671.6px" width="23.2" height="23.6" viewBox="0 0 23.2 23.6"><rect width="23.2" height="23.6" fill="#f3f3f7"/><path d="M15.6 15.3 L19.5 18.8" stroke="#b8641c" stroke-width="3" stroke-linecap="round"/><path d="M15.6 15.3 L19.5 18.8" stroke="#f0a048" stroke-width="1.8" stroke-linecap="round"/><circle cx="10.7" cy="10.4" r="6.4" fill="#f4f7fd" stroke="#7f8fc0" stroke-width="1"/><circle cx="10.7" cy="10.4" r="4.6" fill="url(#lg)"/><path d="M8 10.4 H13.4" stroke="#1f3a9a" stroke-width="1.3"/></svg><svg class="a" style="left:967px;top:671.6px" width="23.2" height="23.6" viewBox="0 0 23.2 23.6"><rect width="23.2" height="23.6" fill="#f3f3f7"/><path d="M15.6 15.3 L19.5 18.8" stroke="#b8641c" stroke-width="3" stroke-linecap="round"/><path d="M15.6 15.3 L19.5 18.8" stroke="#f0a048" stroke-width="1.8" stroke-linecap="round"/><circle cx="10.7" cy="10.4" r="6.4" fill="#f4f7fd" stroke="#7f8fc0" stroke-width="1"/><circle cx="10.7" cy="10.4" r="4.6" fill="url(#lg)"/><path d="M8 10.4 H13.4 M10.7 7.7 V13.1" stroke="#1f3a9a" stroke-width="1.3"/></svg><svg class="a" style="left:992px;top:671.6px" width="23.2" height="23.6" viewBox="0 0 23.2 23.6"><rect width="23.2" height="23.6" fill="#f3f3f7"/><circle cx="12" cy="12.1" r="7.6" fill="url(#bg2)" stroke="#2f62cc" stroke-width=".9"/><g transform="rotate(0 12 12.1)"><path d="M6.8 12.1 L11.8 7.6 V10.3 H16.2 V13.9 H11.8 V16.6 Z" fill="#f2f8ff" stroke="#2f6ad0" stroke-width=".8"/></g></svg><svg class="a" style="left:1017px;top:671.6px" width="23.2" height="23.6" viewBox="0 0 23.2 23.6"><rect width="23.2" height="23.6" fill="#f3f3f7"/><circle cx="12" cy="12.1" r="7.6" fill="url(#bg2)" stroke="#2f62cc" stroke-width=".9"/><g transform="rotate(90 12 12.1)"><path d="M6.8 12.1 L11.8 7.6 V10.3 H16.2 V13.9 H11.8 V16.6 Z" fill="#f2f8ff" stroke="#2f6ad0" stroke-width=".8"/></g></svg><svg class="a" style="left:1042px;top:671.6px" width="23.2" height="23.6" viewBox="0 0 23.2 23.6"><rect width="23.2" height="23.6" fill="#f3f3f7"/><circle cx="12" cy="12.1" r="7.6" fill="url(#bg2)" stroke="#2f62cc" stroke-width=".9"/><g transform="rotate(-90 12 12.1)"><path d="M6.8 12.1 L11.8 7.6 V10.3 H16.2 V13.9 H11.8 V16.6 Z" fill="#f2f8ff" stroke="#2f6ad0" stroke-width=".8"/></g></svg><svg class="a" style="left:1067px;top:671.6px" width="23.2" height="23.6" viewBox="0 0 23.2 23.6"><rect width="23.2" height="23.6" fill="#f3f3f7"/><circle cx="12" cy="12.1" r="7.6" fill="url(#bg2)" stroke="#2f62cc" stroke-width=".9"/><g transform="rotate(180 12 12.1)"><path d="M6.8 12.1 L11.8 7.6 V10.3 H16.2 V13.9 H11.8 V16.6 Z" fill="#f2f8ff" stroke="#2f6ad0" stroke-width=".8"/></g></svg>
<div class="a" style="left:0;top:698px;width:1371px;height:25px;background:#007acc"></div>
<div class="a" style="left:0;top:723px;width:1371px;height:5px;background:#ececec"></div>
<div class="a" style="left:16px;top:723px;width:56px;height:5px;background:#a69d96"></div>
<div class="a" style="left:55px;top:723px;width:5px;height:2px;background:#eee"></div>
<svg class="a" style="left:1357px;top:709px" width="12" height="12" viewBox="0 0 12 12"><path d="M10 2h1v1h-1z M8 4h1v1h-1z M10 4h1v1h-1z M6 6h1v1h-1z M8 6h1v1h-1z M10 6h1v1h-1z M4 8h1v1h-1z M6 8h1v1h-1z M8 8h1v1h-1z M10 8h1v1h-1z" fill="#9fc8ea"/></svg>


<div class="a" style="left:406px;top:273px;width:446px;height:348px;border-radius:9px;background:#fff;border:1px solid #3a3a3a;box-shadow:0 13px 36px 5px rgba(0,0,0,.38),0 0 4px rgba(0,0,0,.25);overflow:hidden">
<div class="a" style="left:0;top:0;width:446px;height:30px;background:#3b3b3b"></div>
</div>
<svg class="a" style="left:415px;top:283px" width="16" height="9" viewBox="0 0 16 9"><path d="M0.5 7.6 H15.5 L11.5 1.4 H4.5 Z" fill="none" stroke="#d8823a" stroke-width=".9"/><path d="M2.5 7.2 L5.2 3 L8 7.2 L10.8 3 L13.5 7.2" fill="none" stroke="#d8823a" stroke-width=".8"/></svg>
<div class="t" style="left:437.0px;top:281.0px;font-size:12px;color:#fff;letter-spacing:-0.08px;">Zapisz plik</div>
<svg class="a" style="left:830px;top:282px" width="12" height="12" viewBox="0 0 12 12"><path d="M1 1 L11 11 M11 1 L1 11" stroke="#fff" stroke-width="1.1"/></svg>
<div class="t" style="left:414.3px;top:332.0px;font-size:12px;color:#6d6d78;font-weight:bold;letter-spacing:-0.26px;">Nazwa pliku</div>
<div class="a" style="left:414px;top:356px;width:430px;height:25px;background:#fff;border:1px solid #c9c9dd"></div>
<div class="t" style="left:419.1px;top:360.0px;font-size:12px;color:#1e1e1e;letter-spacing:-0.09px;">Oferta 152</div>
<div class="t" style="left:414.3px;top:382.0px;font-size:12px;color:#6d6d78;font-weight:bold;letter-spacing:-0.08px;">Notatki</div>
<div class="a" style="left:414px;top:406px;width:430px;height:50px;background:#fff;border:1px solid #c9c9dd"></div>
<div class="t" style="left:419.1px;top:410.0px;font-size:12px;color:#1e1e1e;letter-spacing:-0.20px;">Inwestycja miejsca</div>
<div class="a" style="left:414px;top:462px;width:14px;height:14px;background:#fff;border:1px solid #c9c9dd"></div>
<svg class="a" style="left:414px;top:462px" width="14" height="14" viewBox="0 0 14 14"><path d="M3.2 7 L5.8 9.8 L11 3.8" fill="none" stroke="#222" stroke-width="1.4"/></svg>
<div class="t" style="left:432.5px;top:461.0px;font-size:12px;color:#6d6d78;font-weight:bold;letter-spacing:-0.25px;">Udostępnij ofertę</div>
<div class="a" style="left:414px;top:503px;width:430px;height:80px;background:#fff;border:1px solid #c9c9dd"></div>
<div class="a" style="left:414px;top:481px;width:430px;height:22px;background:#fff;border:1px solid #0078d4"></div>
<div class="a" style="left:418.8px;top:484.5px;width:88px;height:15px;background:#99c9ef"></div>
<div class="t" style="left:419.3px;top:484.0px;font-size:12px;color:#24405e;letter-spacing:-0.26px;">Test2@zasoby.pl</div>
<div class="a" style="left:419.3px;top:497.5px;width:87px;height:1px;background:#24405e"></div>
<svg class="a" style="left:797px;top:486px" width="12" height="12" viewBox="0 0 12 12"><circle cx="4.8" cy="4.8" r="3.4" fill="none" stroke="#333" stroke-width="1.1"/><path d="M7.3 7.3 L10.6 10.6" stroke="#333" stroke-width="1.5"/></svg>
<div class="a" style="left:811px;top:482px;width:16px;height:20px;background:#0078d4"></div>
<svg class="a" style="left:812px;top:485px" width="14" height="14" viewBox="0 0 14 14"><path d="M1.6 12.4 L2.4 9.6 L8.6 3.4 L10.6 5.4 L4.4 11.6 Z" fill="#fff"/><path d="M9.4 2.6 L10.4 1.6 Q11 1 11.6 1.6 L12.4 2.4 Q13 3 12.4 3.6 L11.4 4.6 Z" fill="#fff"/></svg>
<svg class="a" style="left:830px;top:487px" width="10" height="10" viewBox="0 0 10 10"><path d="M1 5 H9 M5 1 V9" stroke="#111" stroke-width="1.7"/></svg>
<svg class="a" style="left:423px;top:506px" width="18" height="18" viewBox="0 0 18 18"><path d="M11.6 3 H1.9 V16 H15.2 V8.4" fill="none" stroke="#2a2a2a" stroke-width="1.4"/><path d="M4.6 13.4 L5.6 10.2 L13 2.8 L15.2 5 L7.8 12.4 Z" fill="#333"/><path d="M14 1.6 L15 0.8 L17 2.8 L16.2 3.8 Z" fill="#333"/></svg>
<div class="t" style="left:444.3px;top:508.0px;font-size:12px;color:#1e1e1e;letter-spacing:-0.26px;">Test2@zasoby.pl</div>
<svg class="a" style="left:822px;top:506px" width="18" height="18" viewBox="0 0 18 18"><circle cx="9" cy="9" r="7.6" fill="#fff" stroke="#777" stroke-width="1"/><path d="M4.6 9 H13.4" stroke="#666" stroke-width="1.6"/></svg>
<div class="a" style="left:689px;top:589px;width:75px;height:23px;background:#f4f5f8;border:1px solid #c9c9dd"></div>
<div class="t" style="left:719.5px;top:593.0px;font-size:12px;color:#1e1e1e;letter-spacing:-0.74px;">Ok</div>
<div class="a" style="left:769px;top:589px;width:75px;height:23px;background:#f4f5f8;border:1px solid #c9c9dd"></div>
<div class="t" style="left:790.0px;top:593.0px;font-size:12px;color:#1e1e1e;letter-spacing:0.05px;">Anuluj</div>

<div class="a" style="left:91.0px;top:132.0px;width:29.2px;height:29.2px;border-radius:50%;background:#8b0000"></div><svg class="a" style="left:97.6px;top:138.6px" width="16" height="16" viewBox="0 0 16 16"><path d="M6.6 1.3 H8.8 V13.6 H6.6 V4.2 L4.3 5.6 V3.6 Z" fill="#fff"/></svg><div class="a" style="left:772.9px;top:346.9px;width:29.2px;height:29.2px;border-radius:50%;background:#8b0000"></div><div class="a" style="left:772.9px;top:353px;width:29.2px;height:20px;line-height:20px;text-align:center;color:#fff;font-size:17px">2</div><div class="a" style="left:529.9px;top:448.9px;width:29.2px;height:29.2px;border-radius:50%;background:#8b0000"></div><div class="a" style="left:529.9px;top:455px;width:29.2px;height:20px;line-height:20px;text-align:center;color:#fff;font-size:17px">3</div><div class="a" style="left:546.9px;top:477.9px;width:29.2px;height:29.2px;border-radius:50%;background:#8b0000"></div><div class="a" style="left:546.9px;top:483px;width:29.2px;height:20px;line-height:20px;text-align:center;color:#fff;font-size:17px">4</div><div class="a" style="left:764.9px;top:473.9px;width:29.2px;height:29.2px;border-radius:50%;background:#8b0000"></div><div class="a" style="left:764.9px;top:479px;width:29.2px;height:20px;line-height:20px;text-align:center;color:#fff;font-size:17px">5</div><div class="a" style="left:798.9px;top:450.9px;width:29.2px;height:29.2px;border-radius:50%;background:#8b0000"></div><div class="a" style="left:798.9px;top:457px;width:29.2px;height:20px;line-height:20px;text-align:center;color:#fff;font-size:17px">6</div><div class="a" style="left:848.9px;top:475.9px;width:29.2px;height:29.2px;border-radius:50%;background:#8b0000"></div><div class="a" style="left:848.9px;top:481px;width:29.2px;height:20px;line-height:20px;text-align:center;color:#fff;font-size:17px">7</div><div class="a" style="left:463.0px;top:524.0px;width:29.2px;height:29.2px;border-radius:50%;background:#8b0000"></div><div class="a" style="left:463.0px;top:530px;width:29.2px;height:20px;line-height:20px;text-align:center;color:#fff;font-size:17px">8</div><svg class="a" style="left:1095px;top:607px" width="14" height="22" viewBox="0 0 14 22"><path d="M1 1 V17.5 L4.8 13.8 L7.8 20.6 L10.2 19.5 L7.3 12.8 H12.4 Z" fill="#fff" stroke="#111" stroke-width="1"/></svg>
</body>
</html>
